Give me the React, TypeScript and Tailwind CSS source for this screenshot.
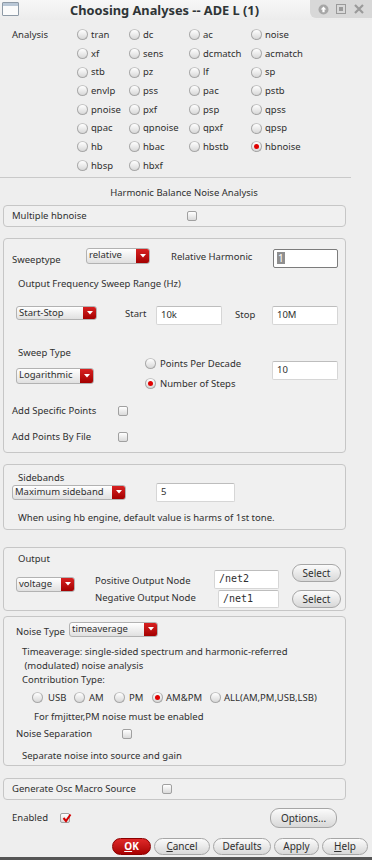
import React from "react";

const rows: string[][] = [
  ["tran", "dc", "ac", "noise"],
  ["xf", "sens", "dcmatch", "acmatch"],
  ["stb", "pz", "lf", "sp"],
  ["envlp", "pss", "pac", "pstb"],
  ["pnoise", "pxf", "psp", "qpss"],
  ["qpac", "qpnoise", "qpxf", "qpsp"],
  ["hb", "hbac", "hbstb", "hbnoise"],
  ["hbsp", "hbxf"],
];

const colW = ["w-[52px]", "w-[60px]", "w-[62px]", "w-[70px]"];

function Radio({ on }: { on?: boolean }) {
  return (
    <span className="inline-flex w-[11px] h-[11px] shrink-0 items-center justify-center rounded-full border border-[#a8a8a8] border-t-[#c4c4c4] bg-gradient-to-b from-[#ffffff] to-[#d8d8d8]">
      {on && <span className="w-[5px] h-[5px] rounded-full bg-[#e00000]" />}
    </span>
  );
}

function Check({ on }: { on?: boolean }) {
  return (
    <span className="relative inline-block w-[10px] h-[10px] shrink-0 rounded-[2px] border border-[#a0a0a0] bg-gradient-to-b from-[#ffffff] to-[#dadada]">
      {on && (
        <svg className="absolute left-[1px] top-[-1px]" width="10" height="10" viewBox="0 0 10 10">
          <path d="M1.5 5 L4 8 L8.5 1.5" fill="none" stroke="#d40000" strokeWidth="2" />
        </svg>
      )}
    </span>
  );
}

function Drop({ label, className }: { label: string; className: string }) {
  return (
    <div className={`flex shrink-0 overflow-hidden rounded-[3px] border border-[#b2b2b2] bg-gradient-to-b from-[#ffffff] to-[#e0e0e0] ${className}`}>
      <span className="flex-1 pl-[2px] leading-[12px] whitespace-nowrap">{label}</span>
      <span className="flex w-[13px] items-center justify-center bg-gradient-to-b from-[#d82020] to-[#a40000]">
        <svg width="6" height="4" viewBox="0 0 6 4">
          <path d="M0 0 L6 0 L3 3.5 Z" fill="#ffffff" />
        </svg>
      </span>
    </div>
  );
}

function Field({ value, className, mono }: { value: string; className: string; mono?: boolean }) {
  return (
    <div
      className={`flex shrink-0 items-center rounded-[2px] border border-[#d6d6d6] border-t-[#bdbdbd] bg-white pl-[4px] ${
        mono ? "font-['DejaVu_Sans_Mono',monospace] text-[10px]" : ""
      } ${className}`}
    >
      {value}
    </div>
  );
}

function Btn({ label, className }: { label: React.ReactNode; className: string }) {
  return (
    <div
      className={`flex shrink-0 items-center justify-center rounded-[9px] border border-[#a6a6a6] bg-gradient-to-b from-[#fbfbfb] to-[#d8d8d8] text-[10px] ${className}`}
    >
      {label}
    </div>
  );
}

function Box({ className, children }: { className: string; children?: React.ReactNode }) {
  return (
    <div className={`ml-[3px] w-[343px] shrink-0 rounded-[4px] border border-[#c6c6c6] bg-[#f0f0f0] ${className}`}>
      {children}
    </div>
  );
}

function TitleBar() {
  return (
    <div className="flex h-[20px] shrink-0 bg-gradient-to-b from-[#f7f7f7] to-[#ececec]">
      <div className="ml-[2px] mt-[2px] h-[14px] w-[17px] shrink-0 overflow-hidden rounded-[1px] border border-[#8e9aa6] bg-[#fbfbfb]">
        <div className="h-[3px] bg-[#b9c7d6]" />
      </div>
      <div className="flex-1 pt-[2px] text-center text-[12.8px] font-bold leading-[16px] text-[#2e3436]">
        Choosing Analyses -- ADE L (1)
      </div>
      <div className="flex h-[18px] w-[62px] shrink-0 items-center justify-around rounded-bl-[6px] bg-[#d8d8d8] px-[4px]">
        <svg width="11" height="11" viewBox="0 0 11 11">
          <circle cx="5.5" cy="5.5" r="5" fill="#a6a6a6" />
          <path d="M5.5 2.5 L8.3 5.6 L6.6 5.6 L6.6 8.3 L4.4 8.3 L4.4 5.6 L2.7 5.6 Z" fill="#ffffff" />
        </svg>
        <svg width="10" height="10" viewBox="0 0 10 10">
          <rect x="0.5" y="0.5" width="9" height="9" fill="none" stroke="#9a9a9a" />
          <rect x="3" y="3" width="4" height="4" fill="#9a9a9a" />
        </svg>
        <svg width="10" height="10" viewBox="0 0 10 10">
          <path d="M1 1 L9 9 M9 1 L1 9" stroke="#9a9a9a" strokeWidth="2.2" />
        </svg>
      </div>
    </div>
  );
}

export default function App() {
  return (
    <div className="flex h-[860px] w-[372px] flex-col overflow-hidden bg-[#eeeeee] font-['Noto_Sans',sans-serif] text-[9.5px] leading-[14px] text-[#2f2f2f]">
      <TitleBar />

      {/* Analysis choices */}
      <div className="flex shrink-0 pt-[5.5px]">
        <div className="w-[77px] shrink-0 pl-[12px] pt-[2px]">Analysis</div>
        <div className="flex flex-col">
          {rows.map((r, i) => (
            <div key={i} className="flex h-[18.7px] items-center">
              {r.map((a, j) => (
                <div key={a} className={`flex items-center gap-[3px] ${colW[j]}`}>
                  <Radio on={a === "hbnoise"} />
                  <span>{a}</span>
                </div>
              ))}
            </div>
          ))}
        </div>
      </div>

      <div className="mt-[1.5px] h-px w-[351px] shrink-0 bg-[#c9c9c9]" />
      <div className="mt-[7px] h-[16px] shrink-0 pr-[4px] text-center leading-[16px]">Harmonic Balance Noise Analysis</div>

      <Box className="mt-[4px] h-[22px] flex items-center">
        <span className="w-[183px] pl-[8px]">Multiple hbnoise</span>
        <Check />
      </Box>

      {/* Sweep */}
      <Box className="mt-[11px] h-[215px] pt-[9px]">
        <div className="flex h-[20px] items-start">
          <span className="mt-[5px] w-[82px] pl-[8px]">Sweeptype</span>
          <Drop label="relative" className="h-[16px] w-[64px]" />
          <span className="ml-[21px] mt-[2px] w-[102px]">Relative Harmonic</span>
          <div className="mt-[1px] flex h-[19px] w-[65px] items-center rounded-[2px] border border-[#7c7c7c] bg-white pl-[3px]">
            <span className="bg-[#8f8f8f] px-[1px] text-[10px] leading-[12px] text-white">1</span>
          </div>
        </div>
        <div className="mt-[9px] pl-[14px]">Output Frequency Sweep Range (Hz)</div>
        <div className="mt-[15px] flex h-[19px] items-start">
          <div className="w-[12px]" />
          <Drop label="Start-Stop" className="h-[14px] w-[81px]" />
          <span className="ml-[28px] mt-[1px] w-[31px]">Start</span>
          <Field value="10k" className="h-[19px] w-[66px]" />
          <span className="ml-[13px] mt-[2px] w-[37px]">Stop</span>
          <Field value="10M" className="h-[19px] w-[66px]" />
        </div>
        <div className="mt-[21px] flex h-[45px] items-start">
          <div className="flex w-[141px] flex-col pl-[14px]">
            <span>Sweep Type</span>
            <Drop label="Logarithmic" className="-ml-[2px] mt-[8px] h-[16px] w-[78px]" />
          </div>
          <div className="flex w-[127px] flex-col gap-[6px] pt-[11px]">
            <div className="flex h-[14px] items-center gap-[4px]">
              <Radio />
              <span>Points Per Decade</span>
            </div>
            <div className="flex h-[14px] items-center gap-[4px]">
              <Radio on />
              <span>Number of Steps</span>
            </div>
          </div>
          <Field value="10" className="mt-[15px] h-[19px] w-[66px]" />
        </div>
        <div className="mt-[13px] flex h-[14px] items-center">
          <span className="w-[114px] pl-[8px]">Add Specific Points</span>
          <Check />
        </div>
        <div className="mt-[12px] flex h-[14px] items-center">
          <span className="w-[114px] pl-[8px]">Add Points By File</span>
          <Check />
        </div>
      </Box>

      {/* Sidebands */}
      <Box className="mt-[11px] h-[66px] pt-[7px]">
        <div className="h-[10px] pl-[14px] leading-[12px]">Sidebands</div>
        <div className="mt-[1px] flex items-start">
          <Drop label="Maximum sideband" className="ml-[8px] mt-[2px] h-[15px] w-[114px]" />
          <Field value="5" className="ml-[30px] h-[19px] w-[79px]" />
        </div>
        <div className="mt-[9px] pl-[14px]">When using hb engine, default value is harms of 1st tone.</div>
      </Box>

      {/* Output */}
      <Box className="mt-[17px] h-[64px] pt-[4px]">
        <div className="flex items-start">
          <div className="flex w-[91px] flex-col pl-[14px]">
            <span>Output</span>
            <Drop label="voltage" className="-ml-[2px] mt-[11px] h-[15px] w-[59px]" />
          </div>
          <div className="flex w-[119px] flex-col pt-[22px]">
            <span>Positive Output Node</span>
            <span className="mt-[3px]">Negative Output Node</span>
          </div>
          <div className="flex w-[78px] flex-col pt-[18px]">
            <Field value="/net2" mono className="h-[19px] w-[65px]" />
            <Field value="/net1" mono className="ml-[4px] mt-[1px] h-[18px] w-[61px]" />
          </div>
          <div className="flex flex-col pt-[12px]">
            <Btn label="Select" className="h-[18px] w-[49px]" />
            <Btn label="Select" className="mt-[8px] h-[18px] w-[49px]" />
          </div>
        </div>
      </Box>

      {/* Noise */}
      <Box className="mt-[5px] h-[150px] pt-[5px]">
        <div className="flex h-[15px] items-start">
          <span className="mt-[3px] w-[65px] pl-[12px]">Noise Type</span>
          <Drop label="timeaverage" className="h-[15px] w-[89px]" />
        </div>
        <div className="mt-[8px] pl-[18px]">
          Timeaverage: single-sided spectrum and harmonic-referred
          <br />
          &nbsp;(modulated) noise analysis
        </div>
        <div className="pl-[18px]">Contribution Type:</div>
        <div className="mt-[4px] flex h-[14px] items-center pl-[28px]">
          <div className="flex w-[42px] items-center gap-[5px]">
            <Radio />
            <span>USB</span>
          </div>
          <div className="flex w-[40px] items-center gap-[4px]">
            <Radio />
            <span>AM</span>
          </div>
          <div className="flex w-[38px] items-center gap-[4px]">
            <Radio />
            <span>PM</span>
          </div>
          <div className="flex w-[58px] items-center gap-[3px]">
            <Radio on />
            <span>AM&amp;PM</span>
          </div>
          <div className="flex items-center gap-[3px]">
            <Radio />
            <span>ALL(AM,PM,USB,LSB)</span>
          </div>
        </div>
        <div className="mt-[5px] pl-[30px]">For fmjitter,PM noise must be enabled</div>
        <div className="mt-[3px] flex h-[14px] items-center">
          <span className="w-[118px] pl-[12px]">Noise Separation</span>
          <Check />
        </div>
        <div className="mt-[8px] pl-[18px]">Separate noise into source and gain</div>
      </Box>

      <Box className="mt-[12px] h-[22px] flex items-center">
        <span className="w-[158px] pl-[8px]">Generate Osc Macro Source</span>
        <Check />
      </Box>

      <div className="mt-[8px] flex h-[21px] shrink-0 items-center">
        <span className="w-[60px] pl-[12px]">Enabled</span>
        <Check on />
        <Btn label="Options..." className="ml-[200px] h-[20px] w-[67px]" />
      </div>

      <div className="mt-[9px] flex h-[17px] shrink-0 gap-[3px] pl-[112px]">
        <div className="flex h-[17px] w-[39px] items-center justify-center rounded-[9px] border border-[#8a0000] bg-gradient-to-b from-[#e02828] to-[#a80000] text-[10px] font-bold text-white">
          <span className="underline underline-offset-1">O</span>K
        </div>
        <Btn label={<><span className="underline underline-offset-1">C</span>ancel</>} className="h-[17px] w-[56px]" />
        <Btn label="Defaults" className="h-[17px] w-[58px]" />
        <Btn label="Apply" className="h-[17px] w-[45px]" />
        <Btn label={<><span className="underline underline-offset-1">H</span>elp</>} className="h-[17px] w-[46px]" />
      </div>
      <div className="mt-auto h-[3px] shrink-0 bg-[#555555]" />
    </div>
  );
}
